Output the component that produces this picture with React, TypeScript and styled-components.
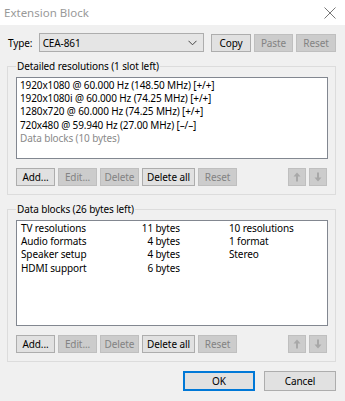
import React from "react";
import styled, { createGlobalStyle, css } from "styled-components";

const GlobalStyle = createGlobalStyle`
  html, body { margin: 0; padding: 0; background: #f0f0f0; }
  body {
    font-family: "Noto Sans", "Open Sans", sans-serif;
    font-size: 10px;
    letter-spacing: -0.12px;
    color: #000;
  }
  * { box-sizing: border-box; }
`;

const Window = styled.div`
  width: 345px;
  height: 401px;
  background: #f0f0f0;
  display: flex;
  flex-direction: column;
`;

const TitleBar = styled.div`
  height: 25px;
  background: #fff;
  display: flex;
  align-items: center;
  justify-content: space-between;
  padding: 0 9px 0 4px;
  color: #999;
  font-size: 11.5px;
  letter-spacing: 0;
`;

const Body = styled.div`
  padding: 8px 9px 0 7px;
  display: flex;
  flex-direction: column;
`;

const TypeRow = styled.div`
  display: flex;
  align-items: center;
  height: 19px;
  padding-left: 1px;
`;

const TypeLabel = styled.span`
  width: 31px;
`;

const Combo = styled.div`
  width: 167px;
  height: 19px;
  background: #e5e5e5;
  border: 1px solid #adadad;
  display: flex;
  align-items: center;
  justify-content: space-between;
  padding: 0 6px 0 3px;
  margin-right: 7px;
`;

const Btn = styled.button<{ $w: number; $h?: number; $primary?: boolean }>`
  width: ${(p) => p.$w}px;
  height: ${(p) => p.$h ?? 18}px;
  font-family: inherit;
  font-size: 10px;
  letter-spacing: -0.1px;
  padding: 0;
  color: #000;
  background: #e1e1e1;
  border: 1px solid #adadad;
  display: flex;
  align-items: center;
  justify-content: center;
  flex: none;
  &:disabled {
    background: #cccccc;
    border-color: #bfbfbf;
    color: #838383;
  }
  ${(p) =>
    p.$primary &&
    css`
      border: 2px solid #0078d7;
    `}
`;

const TopButtons = styled.div`
  display: flex;
  gap: 3px;
`;

const Group = styled.fieldset`
  margin: 8px 0 0 0;
  min-width: 0;
  border: 1px solid #dcdcdc;
  padding: 4px 7px 8px 8px;
`;

const Legend = styled.legend`
  padding: 0 1px;
  line-height: 13px;
`;

const ListBox = styled.div<{ $h: number }>`
  height: ${(p) => p.$h}px;
  background: #fff;
  border: 1px solid #828790;
  padding: 1px 3px;
  line-height: 13.2px;
  white-space: nowrap;
`;

const ListItem = styled.div<{ $muted?: boolean }>`
  color: ${(p) => (p.$muted ? "#8a8a8a" : "#000")};
`;

const BlockGrid = styled.div`
  display: grid;
  grid-template-columns: 100px 59px 1fr;
  padding-left: 1px;
`;

const Cell = styled.span<{ $align?: "right" | "left"; $pad?: number }>`
  text-align: ${(p) => p.$align ?? "left"};
  padding-left: ${(p) => p.$pad ?? 0}px;
`;

const ButtonRow = styled.div`
  display: flex;
  gap: 3px;
  margin-top: 9px;
  padding-right: 1px;
`;

const Spacer = styled.div`
  flex: 1;
`;

const Footer = styled.div`
  display: flex;
  justify-content: flex-end;
  gap: 9px;
  margin-top: 9px;
`;

const Arrow = ({ down }: { down?: boolean }) => (
  <svg width="8" height="10" viewBox="0 0 8 10" style={{ transform: down ? "rotate(180deg)" : undefined }}>
    <polygon points="4,0.5 7.5,4.5 0.5,4.5" fill="#a8a8a8" />
    <rect x="3" y="4" width="2" height="5.5" fill="#a8a8a8" />
  </svg>
);

const Chevron = () => (
  <svg width="9" height="6" viewBox="0 0 9 6">
    <polyline points="0.5,0.8 4.5,4.8 8.5,0.8" fill="none" stroke="#444" strokeWidth="1" />
  </svg>
);

const CloseIcon = () => (
  <svg width="12" height="12" viewBox="0 0 12 12">
    <path d="M0.5 0.5 L11.5 11.5 M11.5 0.5 L0.5 11.5" stroke="#777" strokeWidth="1" fill="none" />
  </svg>
);

const ListButtons = () => (
  <ButtonRow>
    <Btn $w={39}>Add...</Btn>
    <Btn $w={39} disabled>
      Edit...
    </Btn>
    <Btn $w={39} disabled>
      Delete
    </Btn>
    <Btn $w={53}>Delete all</Btn>
    <Btn $w={39} disabled>
      Reset
    </Btn>
    <Spacer />
    <Btn $w={18} disabled>
      <Arrow />
    </Btn>
    <Btn $w={18} disabled>
      <Arrow down />
    </Btn>
  </ButtonRow>
);

const resolutions = [
  "1920x1080 @ 60.000 Hz (148.50 MHz) [+/+]",
  "1920x1080i @ 60.000 Hz (74.25 MHz) [+/+]",
  "1280x720 @ 60.000 Hz (74.25 MHz) [+/+]",
  "720x480 @ 59.940 Hz (27.00 MHz) [\u2013/\u2013]",
];

const blocks: [string, string, string][] = [
  ["TV resolutions", "11 bytes", "10 resolutions"],
  ["Audio formats", "4 bytes", "1 format"],
  ["Speaker setup", "4 bytes", "Stereo"],
  ["HDMI support", "6 bytes", ""],
];

export default function App() {
  return (
    <>
      <GlobalStyle />
      <Window>
        <TitleBar>
          <span>Extension Block</span>
          <CloseIcon />
        </TitleBar>
        <Body>
          <TypeRow>
            <TypeLabel>Type:</TypeLabel>
            <Combo>
              <span>CEA-861</span>
              <Chevron />
            </Combo>
            <TopButtons>
              <Btn $w={40}>Copy</Btn>
              <Btn $w={39} disabled>
                Paste
              </Btn>
              <Btn $w={40} disabled>
                Reset
              </Btn>
            </TopButtons>
          </TypeRow>

          <Group>
            <Legend>Detailed resolutions (1 slot left)</Legend>
            <ListBox $h={82}>
              {resolutions.map((r) => (
                <ListItem key={r}>{r}</ListItem>
              ))}
              <ListItem $muted>Data blocks (10 bytes)</ListItem>
            </ListBox>
            <ListButtons />
          </Group>

          <Group>
            <Legend>Data blocks (26 bytes left)</Legend>
            <ListBox $h={106}>
              <BlockGrid>
                {blocks.map(([a, b, c]) => (
                  <React.Fragment key={a}>
                    <Cell>{a}</Cell>
                    <Cell $align="right">{b}</Cell>
                    <Cell $pad={49}>{c}</Cell>
                  </React.Fragment>
                ))}
              </BlockGrid>
            </ListBox>
            <ListButtons />
          </Group>

          <Footer>
            <Btn $w={72} $h={20} $primary>
              OK
            </Btn>
            <Btn $w={72} $h={20}>
              Cancel
            </Btn>
          </Footer>
        </Body>
      </Window>
    </>
  );
}
